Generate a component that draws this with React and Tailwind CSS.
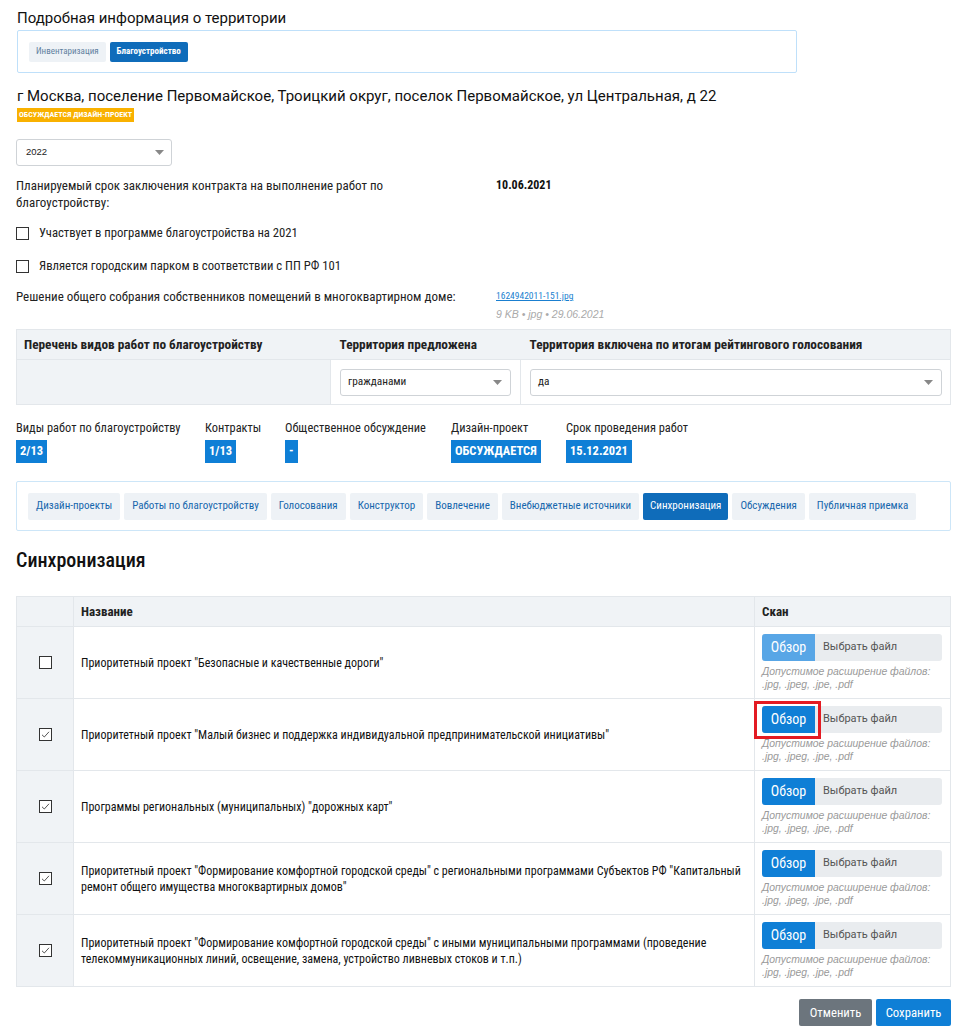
const cond = "font-['Roboto_Condensed','Liberation_Sans_Narrow','DejaVu_Sans_Condensed',Roboto,sans-serif]";

function Check({ checked }) {
  return (
    <svg width="13" height="13" viewBox="0 0 13 13" className="block shrink-0">
      <rect x="0.5" y="0.5" width="12" height="12" fill="#fff" stroke="#333" />
      {checked && <path d="M3 6.8 L5.3 9 L10 3.8" fill="none" stroke="#555" strokeWidth="1" />}
    </svg>
  );
}

function Caret() {
  return (
    <svg width="9" height="5" viewBox="0 0 9 5">
      <path d="M0 0 L9 0 L4.5 5 Z" fill="#888" />
    </svg>
  );
}

const tabs = [
  "Дизайн-проекты",
  "Работы по благоустройству",
  "Голосования",
  "Конструктор",
  "Вовлечение",
  "Внебюджетные источники",
  "Синхронизация",
  "Обсуждения",
  "Публичная приемка",
];

const rows = [
  { checked: false, text: 'Приоритетный проект "Безопасные и качественные дороги"', disabled: true },
  { checked: true, text: 'Приоритетный проект "Малый бизнес и поддержка индивидуальной предпринимательской инициативы"', mark: true },
  { checked: true, text: 'Программы региональных (муниципальных) "дорожных карт"' },
  {
    checked: true,
    text: 'Приоритетный проект "Формирование комфортной городской среды" с региональными программами Субъектов РФ "Капитальный ремонт общего имущества многоквартирных домов"',
  },
  {
    checked: true,
    text: 'Приоритетный проект "Формирование комфортной городской среды" с иными муниципальными программами (проведение телекоммуникационных линий, освещение, замена, устройство ливневых стоков и т.п.)',
  },
];

const stats = [
  { label: "Виды работ по благоустройству", value: "2/13", w: "w-[189px]" },
  { label: "Контракты", value: "1/13", w: "w-[80px]" },
  { label: "Общественное обсуждение", value: "-", w: "w-[166px]" },
  { label: "Дизайн-проект", value: "ОБСУЖДАЕТСЯ", w: "w-[115px]" },
  { label: "Срок проведения работ", value: "15.12.2021", w: "" },
];

export default function App() {
  return (
    <div className={`${cond} w-[967px] bg-white text-[#222] pl-4 pr-4 pb-4`}>
      <h1 className="font-['Roboto',sans-serif] text-[15px] leading-5 pt-[8px] pl-[1px] text-[#111]">
        Подробная информация о территории
      </h1>
      <div className="mt-[2px] ml-[1px] w-[780px] h-[43px] border border-[#bfe0fa] rounded-[2px] flex items-center gap-[4px] px-[11px]">
        <span className="h-[20px] px-[7px] flex items-center text-[9px] bg-[#eef2f6] text-[#5f7f9f] rounded-[2px]">
          Инвентаризация
        </span>
        <span className="h-[20px] px-[7px] flex items-center text-[9px] bg-[#0f6cba] text-white rounded-[2px] font-bold">
          Благоустройство
        </span>
      </div>

      <div className="font-['Roboto',sans-serif] text-[15px] leading-5 mt-[13px] pl-[1px] text-[#111]">
        г Москва, поселение Первомайское, Троицкий округ, поселок Первомайское, ул Центральная, д 22
      </div>
      <div className="mt-[2px] ml-[1px] flex w-fit h-[14px] items-center px-[2px] bg-[#f9b100] text-white text-[8px] font-bold">
        ОБСУЖДАЕТСЯ ДИЗАЙН-ПРОЕКТ
      </div>

      <div className="mt-[17px] w-[156px] h-[27px] border border-[#cfd3d7] rounded-[3px] flex items-center justify-between pl-[9px] pr-[7px] font-['Liberation_Sans',sans-serif] text-[9.5px]">
        <span>2022</span>
        <Caret />
      </div>

      <div className="mt-[11px] flex text-[13px] leading-[17px]">
        <div className="w-[480px] text-[#222]">
          Планируемый срок заключения контракта на выполнение работ по
          <br />
          благоустройству:
        </div>
        <div className="font-bold text-[#111] text-[12px]">10.06.2021</div>
      </div>

      <div className="mt-[14px] flex items-center gap-[10px] text-[12.7px] leading-4">
        <Check />
        <span>Участвует в программе благоустройства на 2021</span>
      </div>
      <div className="mt-[17px] flex items-center gap-[10px] text-[12.7px] leading-4">
        <Check />
        <span>Является городским парком в соответствии с ПП РФ 101</span>
      </div>

      <div className="mt-[15px] flex text-[13px] leading-4">
        <div className="w-[480px]">Решение общего собрания собственников помещений в многоквартирном доме:</div>
        <div>
          <div className="text-[9.5px] text-[#1a7fd0] underline leading-[14px]">1624942011-151.jpg</div>
          <div className="mt-[4px] text-[10.5px] leading-[14px] italic text-[#aaa] font-['Liberation_Sans',sans-serif]">
            9 KB • jpg • 29.06.2021
          </div>
        </div>
      </div>

      <table className="mt-[8px] w-[935px] border-collapse text-[13.3px]">
        <thead>
          <tr className="bg-[#f0f3f6] h-[30px]">
            <th className="w-[314px] text-left font-bold pl-[7px] border-y border-l border-[#e3e7eb]">
              Перечень видов работ по благоустройству
            </th>
            <th className="w-[190px] text-left font-bold pl-[9px] border-y border-[#e3e7eb]">Территория предложена</th>
            <th className="text-left font-bold pl-[9px] border-y border-r border-[#e3e7eb]">
              Территория включена по итогам рейтингового голосования
            </th>
          </tr>
        </thead>
        <tbody>
          <tr className="h-[45px]">
            <td className="bg-[#f0f3f6] border border-[#e3e7eb]"></td>
            <td className="border border-[#e3e7eb] pl-[9px] pr-[9px]">
              <div className="h-[27px] border border-[#cfd3d7] rounded-[3px] flex items-center justify-between pl-[7px] pr-[8px] text-[11.3px]">
                <span>гражданами</span>
                <Caret />
              </div>
            </td>
            <td className="border border-[#e3e7eb] pl-[9px] pr-[8px]">
              <div className="h-[27px] border border-[#cfd3d7] rounded-[3px] flex items-center justify-between pl-[7px] pr-[8px] text-[11.3px]">
                <span>да</span>
                <Caret />
              </div>
            </td>
          </tr>
        </tbody>
      </table>

      <div className="mt-[15px] flex text-[12.4px]">
        {stats.map((s) => (
          <div key={s.label} className={s.w}>
            <div className="leading-4">{s.label}</div>
            <div className="mt-[4px] flex w-fit h-[23px] items-center px-[4px] bg-[#0f7fd6] text-white font-bold text-[12.5px]">
              {s.value}
            </div>
          </div>
        ))}
      </div>

      <div className="mt-[18px] w-[935px] h-[50px] border border-[#cde6f8] rounded-[2px] flex items-center gap-[4px] px-[11px]">
        {tabs.map((t) => (
          <span
            key={t}
            className={
              t === "Синхронизация"
                ? "h-[27px] px-[7px] flex items-center text-[11px] rounded-[2px] bg-[#0f6cba] text-white"
                : "h-[27px] px-[8px] flex items-center text-[11px] rounded-[2px] bg-[#eef2f6] text-[#1667ad]"
            }
          >
            {t}
          </span>
        ))}
      </div>

      <h2 className="mt-[17px] text-[20px] leading-6 font-medium text-[#111]">Синхронизация</h2>

      <table className="mt-[24px] w-[935px] border-collapse text-[12px]">
        <thead>
          <tr className="bg-[#f0f3f6] h-[30px]">
            <th className="w-[57px] border border-[#e3e7eb]"></th>
            <th className="text-left font-bold text-[13px] pl-[7px] border border-[#e3e7eb]">Название</th>
            <th className="w-[196px] text-left font-bold text-[13px] pl-[7px] border border-[#e3e7eb]">Скан</th>
          </tr>
        </thead>
        <tbody>
          {rows.map((r, i) => (
            <tr key={i} className="h-[72px]">
              <td className="bg-[#f0f3f6] border border-[#e3e7eb]">
                <div className="flex justify-center">
                  <Check checked={r.checked} />
                </div>
              </td>
              <td className="border border-[#e3e7eb] pl-[7px] pr-[8px] leading-4 text-[#111]">{r.text}</td>
              <td className="border border-[#e3e7eb] px-[7px] align-top pt-[7px]">
                <div className="flex h-[27px] w-[180px] rounded-[3px] bg-[#e9ecef] relative">
                  <span
                    className={`w-[53px] flex items-center justify-center text-white text-[14px] rounded-l-[3px] ${
                      r.disabled ? "bg-[#58a6e6]" : "bg-[#0f7fd6]"
                    }`}
                  >
                    Обзор
                  </span>
                  <span className="flex items-center pl-[8px] text-[11px] text-[#555] font-['Roboto',sans-serif]">
                    Выбрать файл
                  </span>
                  {r.mark && (
                    <span className="absolute left-[-8px] top-[-5px] w-[67px] h-[38px] border-[3px] border-[#e31b23]" />
                  )}
                </div>
                <div className="mt-[4px] text-[10.4px] leading-[13px] italic text-[#9a9a9a] font-['Liberation_Sans',sans-serif]">
                  Допустимое расширение файлов:
                  <br />
                  .jpg, .jpeg, .jpe, .pdf
                </div>
              </td>
            </tr>
          ))}
        </tbody>
      </table>

      <div className="mt-[12px] flex justify-end gap-[4px]">
        <button className="h-[27px] w-[73px] bg-[#6c757d] text-white text-[12.7px] rounded-[2px]">Отменить</button>
        <button className="h-[27px] w-[75px] bg-[#0f7fd6] text-white text-[12.7px] rounded-[2px]">Сохранить</button>
      </div>
    </div>
  );
}
